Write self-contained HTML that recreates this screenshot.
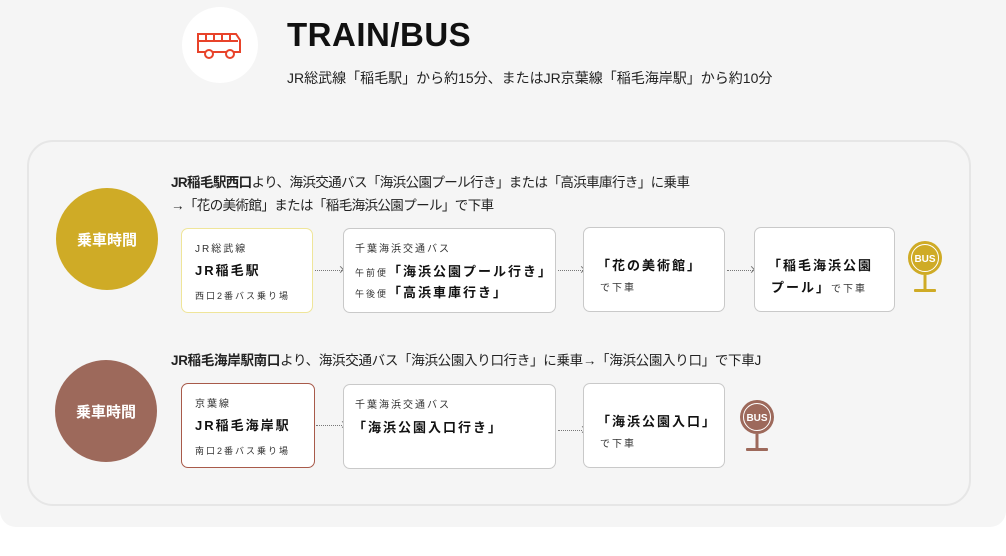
<!DOCTYPE html>
<html><head><meta charset="utf-8"><style>
*{margin:0;padding:0;box-sizing:border-box}
body{width:1006px;height:556px;background:#fff;font-family:"Liberation Sans","Noto Sans CJK JP",sans-serif;color:#111;position:relative;overflow:hidden}
.outer{position:absolute;left:0;top:0;width:1006px;height:527px;background:#f5f5f5;border-radius:0 0 16px 16px}
.inner{position:absolute;left:27px;top:140px;width:944px;height:366px;border:2px solid #e6e6e6;border-radius:26px;background:#f5f5f5}
.abs{position:absolute}
.box{position:absolute;background:#fff;border:1.5px solid #c9c9c9;border-radius:7px;letter-spacing:2px}
.s{font-size:10px;color:#333}
.b{font-size:13px;font-weight:bold}
.circ{position:absolute;width:102px;height:102px;border-radius:50%;color:#fff;font-weight:bold;font-size:15px;display:flex;align-items:center;justify-content:center}
.dot{position:absolute;border-top:1.5px dotted #777;height:0}
.dot:after{content:"";position:absolute;right:-1px;top:-4px;width:4px;height:4px;border-right:1px solid #777;border-top:1px solid #777;transform:rotate(45deg)}
.desc{position:absolute;font-size:13.5px;color:#222;white-space:nowrap}
</style></head><body>
<div class="outer"></div>
<div class="abs" style="left:182px;top:7px;width:76px;height:76px;border-radius:50%;background:#fff"></div>
<svg class="abs" style="left:195px;top:32px" width="50" height="28" viewBox="0 0 50 28" fill="none" stroke="#e8432a" stroke-width="2">
<path d="M3 2h38l4 6v12H3z"/><path d="M3 9h40M11 2v7M19 2v7M27 2v7M35 2v7"/>
<circle cx="14" cy="22" r="4" fill="#fff"/><circle cx="35" cy="22" r="4" fill="#fff"/></svg>
<div class="abs" style="left:287px;top:16px;font-size:33px;font-weight:bold;letter-spacing:0.5px">TRAIN/BUS</div>
<div class="abs" style="left:287px;top:68px;font-size:14px;color:#222">JR総武線「稲毛駅」から約15分、またはJR京葉線「稲毛海岸駅」から約10分</div>
<div class="inner"></div>

<div class="desc" style="left:171px;top:171px;letter-spacing:-0.6px"><b>JR稲毛駅西口</b>より、海浜交通バス「海浜公園プール行き」または「高浜車庫行き」に乗車</div>
<div class="desc" style="left:171px;top:194px;letter-spacing:-0.6px">→「花の美術館」または「稲毛海浜公園プール」で下車</div>
<div class="circ" style="left:56px;top:188px;background:#cfab26">乗車時間</div>

<div class="box" style="left:181px;top:228px;width:132px;height:85px;border-color:#efe59a">
<div class="s abs" style="left:13px;top:11px">JR総武線</div>
<div class="b abs" style="left:13px;top:31px">JR稲毛駅</div>
<div class="s abs" style="left:13px;top:60px;font-size:9px">西口2番バス乗り場</div></div>
<div class="dot" style="left:315px;top:270px;width:27px"></div>
<div class="box" style="left:343px;top:228px;width:213px;height:85px">
<div class="s abs" style="left:11px;top:11px">千葉海浜交通バス</div>
<div class="abs" style="left:11px;top:32px;white-space:nowrap"><span class="s" style="font-size:9px">午前便</span><span class="b">「海浜公園プール行き」</span></div>
<div class="abs" style="left:11px;top:53px;white-space:nowrap"><span class="s" style="font-size:9px">午後便</span><span class="b">「高浜車庫行き」</span></div></div>
<div class="dot" style="left:558px;top:270px;width:25px"></div>
<div class="box" style="left:583px;top:227px;width:142px;height:85px">
<div class="b abs" style="left:13px;top:27px;white-space:nowrap">「花の美術館」</div>
<div class="s abs" style="left:16px;top:51px">で下車</div></div>
<div class="dot" style="left:727px;top:270px;width:26px"></div>
<div class="box" style="left:754px;top:227px;width:141px;height:85px">
<div class="b abs" style="left:13px;top:27px;white-space:nowrap">「稲毛海浜公園</div>
<div class="abs" style="left:16px;top:49px;white-space:nowrap"><span class="b">プール」</span><span class="s">で下車</span></div></div>
<svg class="abs" style="left:906px;top:239px" width="38" height="56" viewBox="0 0 38 56">
<circle cx="19" cy="19" r="17" fill="#cfab26"/><circle cx="19" cy="19" r="13.5" fill="none" stroke="#fff" stroke-width="1"/>
<text x="19" y="23" text-anchor="middle" fill="#fff" font-size="10" font-weight="bold" font-family="Liberation Sans">BUS</text>
<rect x="17.5" y="36" width="3" height="15" fill="#cfab26"/><rect x="8" y="50" width="22" height="3" rx="1" fill="#cfab26"/></svg>

<div class="desc" style="left:171px;top:349px;letter-spacing:-0.3px"><b>JR稲毛海岸駅南口</b>より、海浜交通バス「海浜公園入り口行き」に乗車→「海浜公園入り口」で下車J</div>
<div class="circ" style="left:55px;top:360px;background:#9d695b">乗車時間</div>

<div class="box" style="left:181px;top:383px;width:134px;height:85px;border-color:#a85a4a">
<div class="s abs" style="left:13px;top:11px">京葉線</div>
<div class="b abs" style="left:13px;top:31px">JR稲毛海岸駅</div>
<div class="s abs" style="left:13px;top:60px;font-size:9px">南口2番バス乗り場</div></div>
<div class="dot" style="left:316px;top:425px;width:28px"></div>
<div class="box" style="left:343px;top:384px;width:213px;height:85px">
<div class="s abs" style="left:11px;top:11px">千葉海浜交通バス</div>
<div class="b abs" style="left:9px;top:32px;white-space:nowrap">「海浜公園入口行き」</div></div>
<div class="dot" style="left:558px;top:430px;width:26px"></div>
<div class="box" style="left:583px;top:383px;width:142px;height:85px">
<div class="b abs" style="left:13px;top:27px;white-space:nowrap">「海浜公園入口」</div>
<div class="s abs" style="left:16px;top:51px">で下車</div></div>
<svg class="abs" style="left:738px;top:398px" width="38" height="56" viewBox="0 0 38 56">
<circle cx="19" cy="19" r="17" fill="#9d695b"/><circle cx="19" cy="19" r="13.5" fill="none" stroke="#fff" stroke-width="1"/>
<text x="19" y="23" text-anchor="middle" fill="#fff" font-size="10" font-weight="bold" font-family="Liberation Sans">BUS</text>
<rect x="17.5" y="36" width="3" height="15" fill="#9d695b"/><rect x="8" y="50" width="22" height="3" rx="1" fill="#9d695b"/></svg>
</body></html>
